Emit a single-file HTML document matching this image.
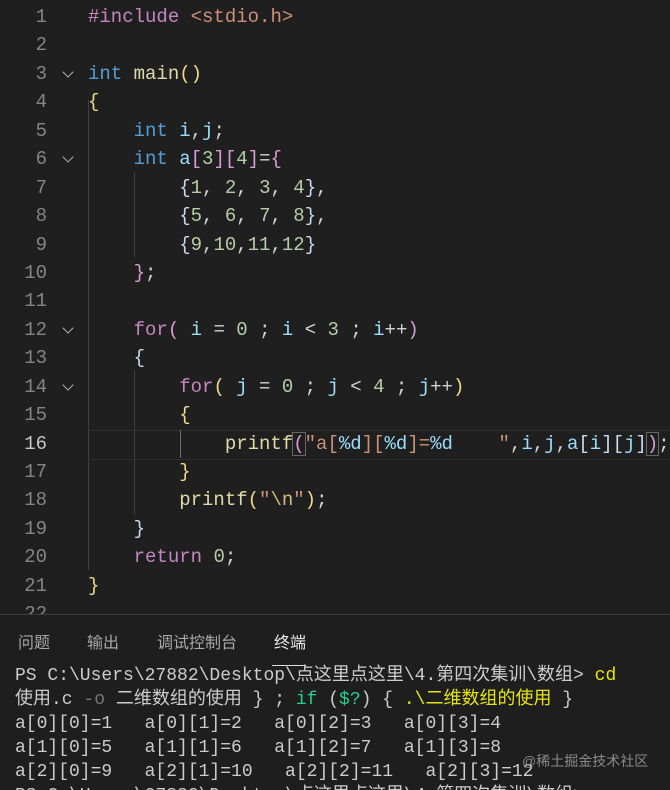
<!DOCTYPE html>
<html style="height:790px;overflow:hidden"><head><meta charset="utf-8"><style>
body{margin:0;width:670px;height:790px;background:#1f1f1f;overflow:hidden;position:relative;font-family:"Liberation Mono","Noto Sans CJK SC",monospace}
.ed{position:absolute;left:0;top:3px;width:670px}
.l{height:28.45px;line-height:28.45px;font-size:19px;white-space:pre;position:relative;color:#d4d4d4}
.n{position:absolute;left:0;width:47px;text-align:right;color:#858585}
.c{position:absolute;left:88px}
.f{position:absolute;left:64px;top:8px;width:7px;height:7px;border-right:1.5px solid #b0b0b0;border-bottom:1.5px solid #b0b0b0;transform:rotate(45deg)}
.k{color:#569cd6}.p{color:#c586c0}.s{color:#ce9178}.fn{color:#dcdcaa}.nu{color:#b5cea8}.v{color:#9cdcfe}.y{color:#f0d88a}.b{color:#c8d8f0}.m{color:#da9ad6}.e{color:#d7ba7d}
.g{position:absolute;width:1px;background:#404040}
.term{position:absolute;left:0;top:614px;width:670px;height:176px;border-top:1px solid #3c3c3c;background:#1e1e1e;overflow:hidden}
.tab{position:absolute;top:14px;font-size:16px;color:#a8a8a8;font-family:"Liberation Sans","Noto Sans CJK SC",sans-serif}
.t{position:absolute;left:15px;font-size:18px;white-space:pre;color:#cccccc;line-height:24px}
</style></head><body>
<div class="g" style="left:88px;top:100px;height:470px"></div>
<div class="g" style="left:134px;top:172px;height:85px"></div>
<div class="g" style="left:134px;top:370px;height:145px"></div>
<div style="position:absolute;left:88px;top:430px;width:582px;height:28px;border-top:1px solid #2e2e2e;border-bottom:1px solid #2e2e2e"></div>
<div class="g" style="left:180px;top:430px;height:28px;background:#707070"></div>
<div class="ed">
<div class="l"><span class="n">1</span><span class="c"><span class="p">#include</span> <span class="s">&lt;stdio.h&gt;</span></span></div>
<div class="l"><span class="n">2</span></div>
<div class="l"><span class="n">3</span><i class="f"></i><span class="c"><span class="k">int</span> <span class="fn">main</span><span class="y">()</span></span></div>
<div class="l"><span class="n">4</span><span class="c"><span class="y">{</span></span></div>
<div class="l"><span class="n">5</span><span class="c">    <span class="k">int</span> <span class="v">i</span>,<span class="v">j</span>;</span></div>
<div class="l"><span class="n">6</span><i class="f"></i><span class="c">    <span class="k">int</span> <span class="v">a</span><span class="m">[</span><span class="nu">3</span><span class="m">][</span><span class="nu">4</span><span class="m">]</span>=<span class="m">{</span></span></div>
<div class="l"><span class="n">7</span><span class="c">        <span class="b">{</span><span class="nu">1</span>, <span class="nu">2</span>, <span class="nu">3</span>, <span class="nu">4</span><span class="b">}</span>,</span></div>
<div class="l"><span class="n">8</span><span class="c">        <span class="b">{</span><span class="nu">5</span>, <span class="nu">6</span>, <span class="nu">7</span>, <span class="nu">8</span><span class="b">}</span>,</span></div>
<div class="l"><span class="n">9</span><span class="c">        <span class="b">{</span><span class="nu">9</span>,<span class="nu">10</span>,<span class="nu">11</span>,<span class="nu">12</span><span class="b">}</span></span></div>
<div class="l"><span class="n">10</span><span class="c">    <span class="m">}</span>;</span></div>
<div class="l"><span class="n">11</span></div>
<div class="l"><span class="n">12</span><i class="f"></i><span class="c">    <span class="p">for</span><span class="m">(</span> <span class="v">i</span> = <span class="nu">0</span> ; <span class="v">i</span> &lt; <span class="nu">3</span> ; <span class="v">i</span>++<span class="m">)</span></span></div>
<div class="l"><span class="n">13</span><span class="c">    <span class="b">{</span></span></div>
<div class="l"><span class="n">14</span><i class="f"></i><span class="c">        <span class="p">for</span><span class="y">(</span> <span class="v">j</span> = <span class="nu">0</span> ; <span class="v">j</span> &lt; <span class="nu">4</span> ; <span class="v">j</span>++<span class="y">)</span></span></div>
<div class="l"><span class="n">15</span><span class="c">        <span class="y">{</span></span></div>
<div class="l"><span class="n" style="color:#c6c6c6">16</span><span class="c">            <span class="fn">printf</span><span class="m" style="outline:1px solid #666">(</span><span class="s">"a[<span class="v">%d</span>][<span class="v">%d</span>]=<span class="v">%d</span>    "</span>,<span class="v">i</span>,<span class="v">j</span>,<span class="v">a</span><span class="b">[</span><span class="v">i</span><span class="b">][</span><span class="v">j</span><span class="b">]</span><span class="m" style="outline:1px solid #666">)</span>;</span></div>
<div class="l"><span class="n">17</span><span class="c">        <span class="y">}</span></span></div>
<div class="l"><span class="n">18</span><span class="c">        <span class="fn">printf</span><span class="y">(</span><span class="s">"<span class="e">\n</span>"</span><span class="y">)</span>;</span></div>
<div class="l"><span class="n">19</span><span class="c">    <span class="b">}</span></span></div>
<div class="l"><span class="n">20</span><span class="c">    <span class="p">return</span> <span class="nu">0</span>;</span></div>
<div class="l"><span class="n">21</span><span class="c"><span class="y">}</span></span></div>
<div class="l"><span class="n">22</span></div>
</div>
<div class="term">
<span class="tab" style="left:18px">问题</span>
<span class="tab" style="left:87px">输出</span>
<span class="tab" style="left:157px">调试控制台</span>
<span class="tab" style="left:274px;color:#e8e8e8">终端</span>
<div style="position:absolute;left:272px;top:50px;width:34px;height:1px;background:#ddd"></div>
<div class="t" style="top:49px">PS C:\Users\27882\Desktop\点这里点这里\4.第四次集训\数组&gt; <span style="color:#e5e510">cd</span></div>
<div class="t" style="top:73px">使用.c <span style="color:#777">-o</span> 二维数组的使用 } ; <span style="color:#23d18b">if</span> (<span style="color:#23d18b">$?</span>) { <span style="color:#e5e510">.\二维数组的使用</span> }</div>
<div class="t" style="top:97px">a[0][0]=1   a[0][1]=2   a[0][2]=3   a[0][3]=4</div>
<div class="t" style="top:121px">a[1][0]=5   a[1][1]=6   a[1][2]=7   a[1][3]=8</div>
<div class="t" style="top:145px">a[2][0]=9   a[2][1]=10   a[2][2]=11   a[2][3]=12</div>
<div class="t" style="top:169px">PS C:\Users\27882\Desktop\点这里点这里\4.第四次集训\数组&gt;</div>
<div style="position:absolute;left:522px;top:136px;font-size:14px;color:#8a8a8a;font-family:'Liberation Sans','Noto Sans CJK SC',sans-serif">@稀土掘金技术社区</div>
</div>
</body></html>
